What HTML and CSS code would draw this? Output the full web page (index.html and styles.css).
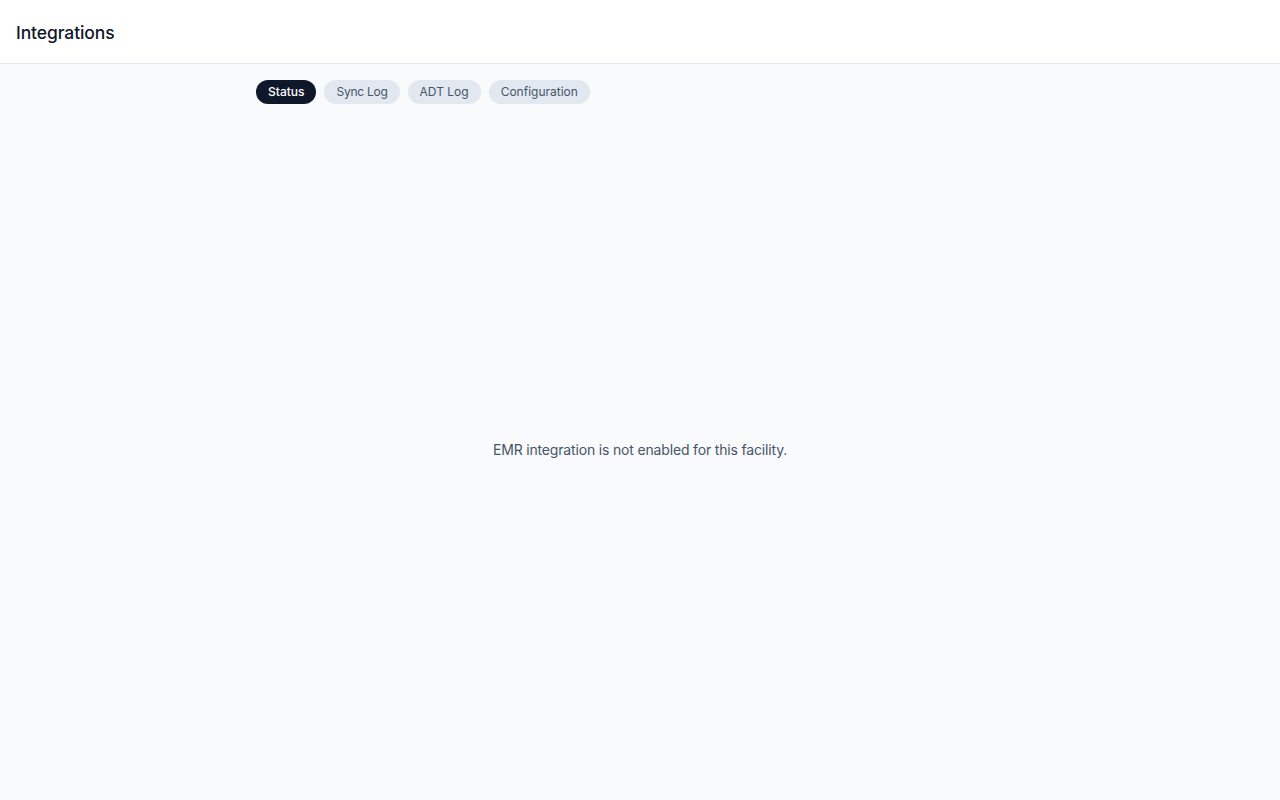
FILE: index.html
```html
<!DOCTYPE html>
<html lang="en">
<head>
<meta charset="utf-8">
<title>Integrations</title>
<link rel="stylesheet" href="styles.css">
</head>
<body>
<div class="app">
  <header class="topbar">
    <h1 class="title">Integrations</h1>
  </header>
  <main class="main">
    <nav class="tabs">
      <button class="tab tab-active">Status</button>
      <button class="tab tab-tight">Sync Log</button>
      <button class="tab">ADT Log</button>
      <button class="tab">Configuration</button>
    </nav>
    <div class="empty">
      <p class="empty-text">EMR integration is not enabled for this facility.</p>
    </div>
  </main>
</div>
</body>
</html>
```
FILE: styles.css
```css
* { box-sizing: border-box; }
html, body { margin: 0; padding: 0; height: 100%; }
body {
  font-family: Inter, "Noto Sans", sans-serif;
  background: #f8fafc;
  color: #0f172a;
}
.app { display: flex; flex-direction: column; min-height: 100vh; }
.topbar {
  height: 64px;
  background: #ffffff;
  border-bottom: 1px solid #e2e8f0;
  display: flex;
  align-items: center;
  padding: 0 16px;
}
.title {
  margin: 2px 0 0;
  font-size: 17.5px;
  font-weight: 500;
  letter-spacing: -0.1px;
  color: #0f172a;
}
.main {
  flex: 1;
  display: flex;
  flex-direction: column;
  width: 768px;
  margin: 0 auto;
  padding: 16px 0 6px;
}
.tabs { display: flex; gap: 8px; }
.tab {
  font-family: inherit;
  font-size: 12px;
  font-weight: 400;
  line-height: 16px;
  height: 24px;
  padding: 0 12px 1px;
  border: none;
  border-radius: 999px;
  background: #e2e8f0;
  color: #475569;
  cursor: pointer;
}
.tab-tight { letter-spacing: -0.25px; }
.tab-active { background: #0f172a; color: #ffffff; font-weight: 500; }
.empty {
  flex: 1;
  display: flex;
  align-items: center;
  justify-content: center;
}
.empty-text { margin: 0; font-size: 14px; letter-spacing: -0.17px; color: #475569; }
```
